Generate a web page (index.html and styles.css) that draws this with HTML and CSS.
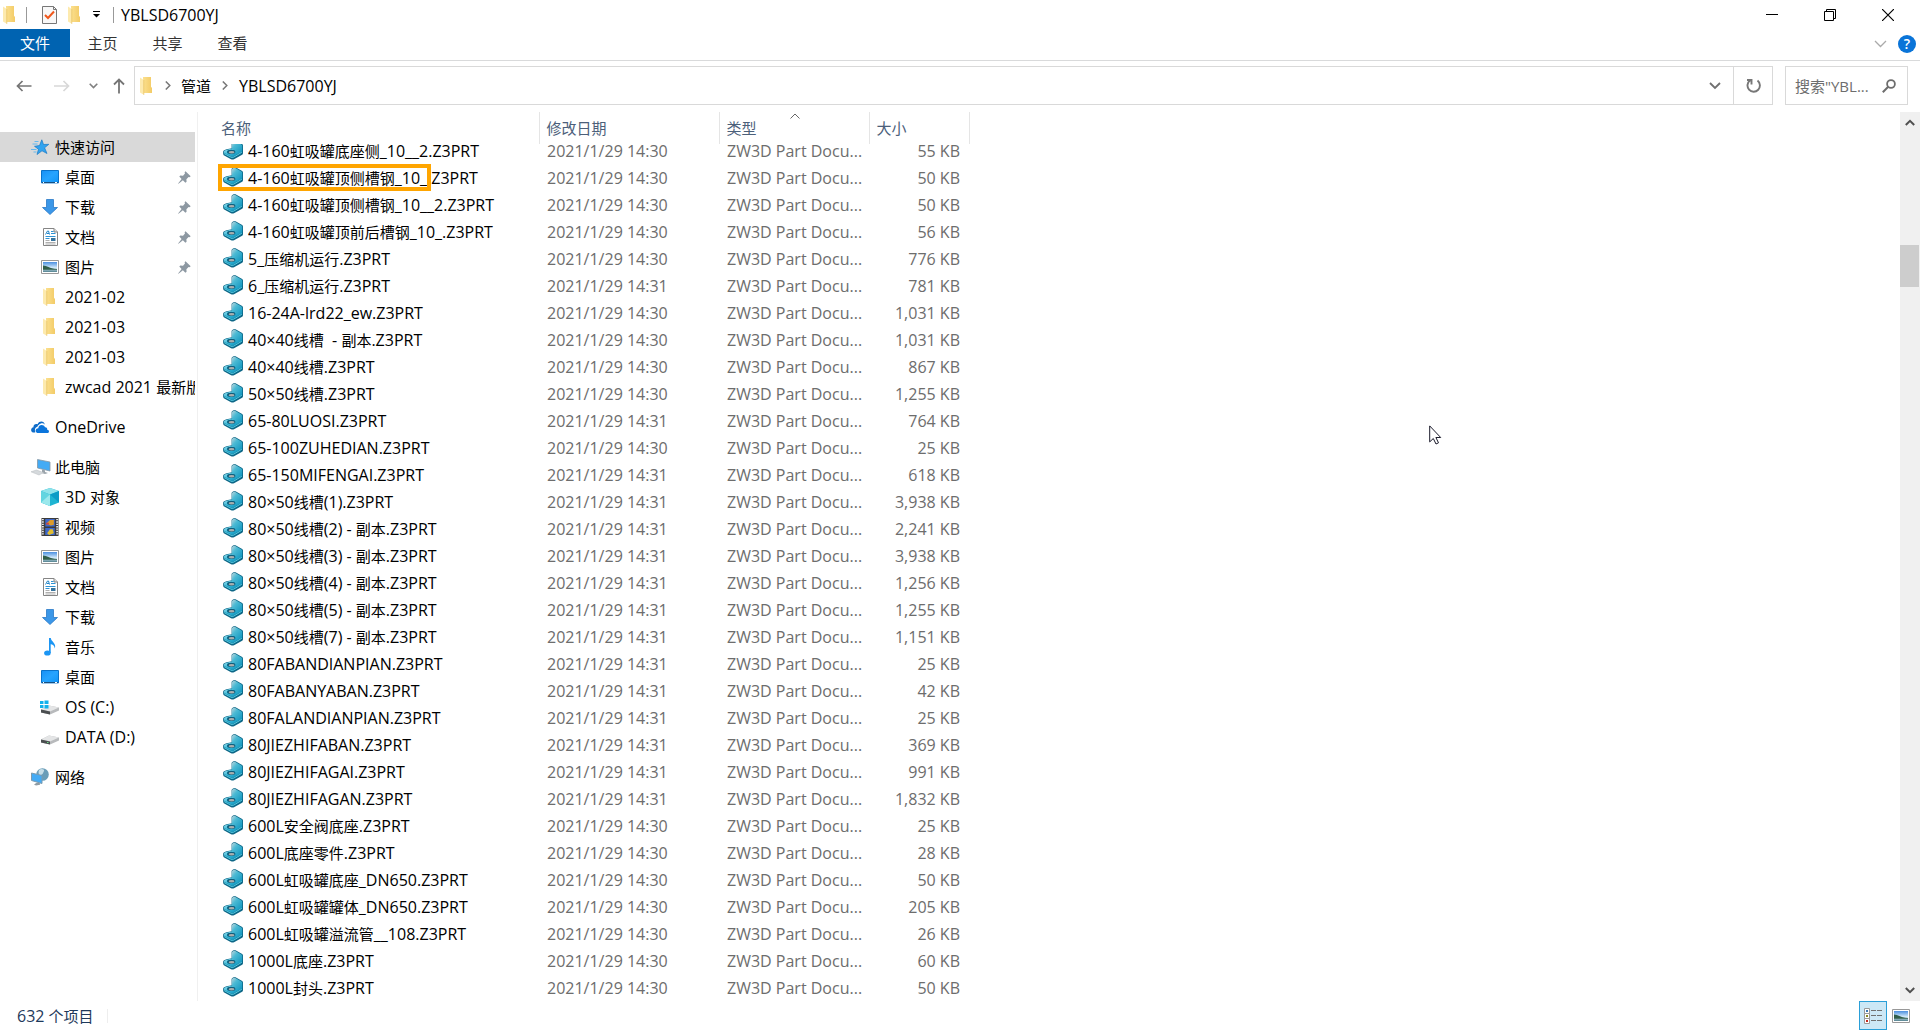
FILE: index.html
```html
<!DOCTYPE html>
<html lang="zh-CN">
<head>
<meta charset="utf-8">
<title>YBLSD6700YJ</title>
<link rel="stylesheet" href="styles.css">
</head>
<body>
<svg class="defs" width="0" height="0" aria-hidden="true">
  <defs>
    <linearGradient id="g-part" x1="0" y1="0" x2="1" y2="1"><stop offset="0" stop-color="#9fe3f0"/><stop offset=".45" stop-color="#2fb4d6"/><stop offset="1" stop-color="#0a86b0"/></linearGradient>
    <linearGradient id="g-fin" x1="0" y1="0" x2="1" y2="1"><stop offset="0" stop-color="#b9d3da"/><stop offset=".35" stop-color="#4bbad4"/><stop offset="1" stop-color="#1396bf"/></linearGradient>
    <linearGradient id="g-folder" x1="0" y1="0" x2="1" y2="0"><stop offset="0" stop-color="#fbe08f"/><stop offset="1" stop-color="#f3cb66"/></linearGradient>
    <linearGradient id="g-sky" x1="0" y1="0" x2="0" y2="1"><stop offset="0" stop-color="#4a8fe0"/><stop offset=".6" stop-color="#d9eefb"/><stop offset="1" stop-color="#4f7f8c"/></linearGradient>
    <linearGradient id="g-screen" x1="0" y1="0" x2="1" y2="1"><stop offset="0" stop-color="#1790f5"/><stop offset=".5" stop-color="#27a4ff"/><stop offset="1" stop-color="#0f94f7"/></linearGradient>
    <symbol id="part" viewBox="0 0 20 20"><path d="M.2 11.500C.5 9.500 6 8.800 8.600 8.200V2C9 .5 11 0 12.500.3L19.200 4c.6.500.8 1 .8 2v7c0 1-.5 1.600-1.300 2.100L11 19.200c-1 .5-2 .5-3 0L1.200 15.600C.2 15 0 13.500.2 11.500Z" fill="#0d6787"/><path d="M1 11.500C1.500 10.200 6 9.300 9 8.600l9.500 3.200-8 4.800c-.7.400-1.500.4-2.300 0L1.300 13C.8 12.600.8 12 1 11.500Z" fill="url(#g-part)"/><path d="M9 8.600V2.500C9.300 1.200 11 .8 12.300 1.100L18.500 4.500c.5.400.7.800.7 1.500v5.200c0 .4-.3.600-.7.700-3 1.300-6.500.3-9.500-3.300Z" fill="url(#g-fin)"/><path d="M1.200 13.600 8 17.200c.9.400 1.800.4 2.600 0L18.800 12.300" fill="none" stroke="#5fd6ec" stroke-width=".9"/><ellipse cx="8.200" cy="11.900" rx="4.200" ry="2.100" fill="#0d5f7e"/><ellipse cx="8.600" cy="12.300" rx="2.900" ry="1.300" fill="#a9aeae"/></symbol>
    <symbol id="folder" viewBox="0 0 12 18"><path d="M3 0h8v9.800l1 1.200V16H3Z" fill="url(#g-folder)"/><path d="M0 .5 3.800 3v14.800L0 15.500Z" fill="#fdeaae"/><path d="M3.800 3v14.800" stroke="#e6bf5b" stroke-width=".7"/></symbol>
    <symbol id="star" viewBox="0 0 18 16"><path d="m10.800.8 1.700 4.700 5.300-.2-4.200 3.500 2.400 5.700-5-2.700L6 15.500l1.500-5.300L3.500 7.300l5-.8Z" fill="#31a3ef" stroke="#1979c4" stroke-width=".7"/><path d="M3.500 2.500h4M1.500 5h5M0 10.500h5.500M2.500 13h3" stroke="#66b9ee" stroke-width="1"/></symbol>
    <symbol id="desktop" viewBox="0 0 18 14"><path d="M.5.500h17v12.400H.5Z" fill="url(#g-screen)" stroke="#0b72c9"/><path d="M1 12.500h16" stroke="#174f80"/><path d="M2 12.500h1M14 12.500h2" stroke="#fff"/></symbol>
    <symbol id="down" viewBox="0 0 16 16"><path d="M4.500.500h7v8h4L8 15.500.500 8.500h4Z" fill="#3b97e8" stroke="#2a78c6" stroke-width=".8"/></symbol>
    <symbol id="doc" viewBox="0 0 15 18"><path d="M.5.500h10.500l3.500 3.500v13.500H.5Z" fill="#fff" stroke="#858585"/><path d="M11 .5V4h3.500" fill="#ddd" stroke="#858585"/><path d="m2.500 6.500 2-3.500h1l1 3.500M4 5.500h2" fill="none" stroke="#2386c8"/><path d="M8 3.500h2.500M8 5.500h4.500M2.500 8.500h10M2.500 10.500h4" stroke="#2d93d4"/><path d="M2.500 12.500h4M2.500 14.500h10M2.500 16h10" stroke="#a6a6a6" stroke-width=".9"/><path d="M8 10h4.500v3H8Z" fill="#36739d"/></symbol>
    <symbol id="picture" viewBox="0 0 18 14"><path d="M.5.500h17v13H.5Z" fill="#fff" stroke="#989898"/><path d="M2 2h14v10H2Z" fill="url(#g-sky)"/><path d="M2 5.500c4 0 6 3 14 3.500v.8H2Z" fill="#315e4a"/></symbol>
    <symbol id="cloud" viewBox="0 0 18 12"><path d="M1.800 11.500C-.8 10-.2 6.800 2.500 6.300 2 3.800 4.500 2.200 6.500 3.200 8.500-.8 13.500.200 13.700 3.800 11-.200 6 5 6.500 5.800 3.800 6 3.500 9.500 4.300 11.500Z" fill="#0f6cc8"/><path d="M6.300 12C3.500 11 4.300 7.300 7.300 7.200 7.500 3.300 12.800 2.800 14 6.300c2-.2 2.300 1.300 2.200 2.400 2.300.3 2.300 2.900.3 3.300Z" fill="#0b75dc"/></symbol>
    <symbol id="pc" viewBox="0 0 20 18"><path d="m6.500 1.500 12.500 2.500v9L6.500 10Z" fill="#44abf5" stroke="#8796a2" stroke-width=".8"/><path d="m11 11.500 3 .8v1.700l3 1-3 1-5-1.500 2-.6Z" fill="#9aa3aa"/><path d="M0 13.800 5.500 12l7 2.600L8 17Z" fill="#d5d9dc" stroke="#b4babf" stroke-width=".5"/></symbol>
    <symbol id="cube" viewBox="0 0 18 18"><path d="m9 0 9 3v11.500L9 18 0 14.500V3Z" fill="#1eb4d2"/><path d="m0 3 9-3 9 3-9 3.500Z" fill="#8fe3ea"/><path d="M0 3 9 6.500V18L0 14.500Z" fill="#62d5e0"/><path d="M9 6.500 0 14.500 9 18Z" fill="#9be8ec"/><path d="M9 6.500 18 14.500V3Z" fill="#0b9cc6"/></symbol>
    <symbol id="film" viewBox="0 0 18 19"><path d="M0 0h18v19H0Z" fill="#3b3b3b"/><path d="M1.500 1v17M16.500 1v17" stroke="#eee" stroke-width="1.800" stroke-dasharray="1.500 1"/><path d="M4 1h10v8H4ZM4 10.500h10V18H4Z" fill="#3d68c9"/><path d="M9 2h4v5l-3 1-5-2Z" fill="#dd9b28"/><path d="M9 12h3l1 4-5 2-2-2Z" fill="#e1bd32"/><path d="M5 5h3v2H5Z" fill="#c94845"/></symbol>
    <symbol id="note" viewBox="0 0 12 18"><ellipse cx="3.400" cy="15" rx="3.300" ry="2.600" fill="#1b95f3"/><path d="M5 15V0h1.800c.4 3.800 6 5.300 3.900 10.500C10.500 7 8 6.500 6.700 6.300V15Z" fill="#1b95f3"/></symbol>
    <symbol id="drive" viewBox="0 0 18 10"><path d="M0 4.500 8 .5l10 2v3L9 9.500 0 7.500Z" fill="#b8babc"/><path d="M0 4.500 8 .5l10 2-9 4Z" fill="#e4e5e6"/><path d="m0 4.500 9 2v3L0 7.500Z" fill="#4b4e50"/><path d="M6 7.500h1.500" stroke="#6fe08b"/></symbol>
    <symbol id="osdrive" viewBox="0 0 19 15"><path d="M1 9.500 9 5.500l10 2v3L10 14.500 1 12.500Z" fill="#b8babc"/><path d="M1 9.500 9 5.500l10 2-9 4Z" fill="#e4e5e6"/><path d="m1 9.500 9 2v3L1 12.500Z" fill="#4b4e50"/><path d="M0 1h3.500v3H0ZM4.500.500H8.500V4h-4ZM0 5h3.500v3H0ZM4.500 5h4v3.500h-4Z" fill="#12b1ec"/></symbol>
    <symbol id="network" viewBox="0 0 18 18"><circle cx="11.500" cy="6.500" r="6.300" fill="#6a9db8"/><path d="M8 2c2-2 6-1 5 1s-1 3-3 4-3-2-2-5Z" fill="#c6dde7"/><path d="m.5 5 10.500 2.500v8L.5 12.500Z" fill="#44abf5" stroke="#7b9bb0"/><path d="m6 14.500 3 .8v1.500l-4 .7-2-1Z" fill="#8f9ba3"/></symbol>
    <symbol id="pin" viewBox="0 0 13 13"><path d="m7.500.200 5.200 5-1.200 1-.9-.2-2.200 2.300.2 2.500-1.200 1-2.500-2.600L.5 12.800l-.4-.4 3.500-4.500L1.300 5.600l1-1 2.700.1L7 2.500l-.4-1.300Z" fill="#8d98a2"/></symbol>
  </defs>
</svg>

<header class="titlebar">
  <svg class="i-folder" aria-hidden="true"><use href="#folder"/></svg>
  <span class="rule"></span>
  <button class="quick" aria-label="属性"><svg width="15" height="18" viewBox="0 0 15 18"><path d="M.5.500h11l3 3v14H.5Z" fill="#f8f8f8" stroke="#777"/><path d="M11.500.500v3h3" fill="none" stroke="#777"/><path d="m3 9 3 3 6-6.500" fill="none" stroke="#f0581c" stroke-width="2"/></svg></button>
  <button class="quick" aria-label="新建文件夹"><svg class="i-folder"><use href="#folder"/></svg></button>
  <button class="quick menu" aria-label="自定义快速访问工具栏"><svg width="7" height="7" viewBox="0 0 7 7"><path d="M0 .5h7" stroke="#000"/><path d="M0 3h7L3.500 6.500Z"/></svg></button>
  <span class="rule"></span>
  <h1>YBLSD6700YJ</h1>
  <div class="winbtns">
    <button aria-label="最小化"><svg width="12" height="12" viewBox="0 0 12 12"><path d="M0 5.500h12" stroke="#000"/></svg></button>
    <button aria-label="向下还原"><svg width="12" height="12" viewBox="0 0 12 12" fill="none" stroke="#000"><path d="M.5 2.500h9v9h-9Z"/><path d="M2.500 2.500v-2h9v9h-2"/></svg></button>
    <button aria-label="关闭"><svg width="12" height="12" viewBox="0 0 12 12"><path d="m0 0 12 12M12 0 0 12" stroke="#000" stroke-width="1.200"/></svg></button>
  </div>
</header>

<nav class="ribbon">
  <button class="tab file">文件</button>
  <button class="tab">主页</button>
  <button class="tab">共享</button>
  <button class="tab">查看</button>
  <div class="ribbon-end">
    <button aria-label="展开功能区"><svg width="13" height="8" viewBox="0 0 13 8"><path d="m1 1 5.500 5.500L12 1" fill="none" stroke="#aaa" stroke-width="1.300"/></svg></button>
    <button class="help" aria-label="帮助">?</button>
  </div>
</nav>

<div class="addressbar">
  <div class="arrows">
    <button aria-label="后退"><svg width="16" height="12" viewBox="0 0 16 12"><path d="M15.500 6H1.500M6.500 1l-5 5 5 5" fill="none" stroke="#757575" stroke-width="1.700"/></svg></button>
    <button aria-label="前进"><svg width="16" height="12" viewBox="0 0 16 12"><path d="M0 6h14M9.500 1l5 5-5 5" fill="none" stroke="#d8d8d8" stroke-width="1.700"/></svg></button>
    <button class="narrow" aria-label="最近浏览的位置"><svg width="9" height="6" viewBox="0 0 9 6"><path d="m.7.700 3.800 3.800L8.300.700" fill="none" stroke="#808080" stroke-width="1.600"/></svg></button>
    <button class="narrow" aria-label="上移"><svg width="12" height="16" viewBox="0 0 12 16"><path d="M6 15.500V1.500M1 6.500l5-5 5 5" fill="none" stroke="#757575" stroke-width="1.800"/></svg></button>
  </div>
  <div class="path">
    <svg class="i-folder" aria-hidden="true"><use href="#folder"/></svg>
    <svg class="sep" width="6" height="9" viewBox="0 0 6 9"><path d="m.8.500 4 4-4 4" fill="none" stroke="#777" stroke-width="1.500"/></svg>
    <a href="#" class="zh">管道</a>
    <svg class="sep" width="6" height="9" viewBox="0 0 6 9"><path d="m.8.500 4 4-4 4" fill="none" stroke="#777" stroke-width="1.500"/></svg>
    <a href="#">YBLSD6700YJ</a>
    <button class="drop" aria-label="以前的位置"><svg width="12" height="8" viewBox="0 0 12 8"><path d="m1 1 5 5 5-5" fill="none" stroke="#707070" stroke-width="1.800"/></svg></button>
    <button class="refresh" aria-label="刷新"><svg width="15" height="15" viewBox="0 0 15 15"><path d="M11.500 2.600A6.200 6.200 0 1 1 4 2.500M1 2h4.500V6.500" fill="none" stroke="#777" stroke-width="1.900"/></svg></button>
  </div>
  <label class="search"><input type="text" aria-label="搜索" placeholder="搜索&quot;YBL..."><svg width="14" height="14" viewBox="0 0 14 14"><circle cx="9" cy="5" r="3.900" fill="none" stroke="#6d6d6d" stroke-width="1.800"/><path d="M6.200 7.800.800 13.200" stroke="#6d6d6d" stroke-width="2"/></svg></label>
</div>

<main>
  <aside>
    <ul>
      <li class="root active"><svg class="ic"><use href="#star" width="18" height="16" y="1"/></svg><a href="#" class="zh">快速访问</a></li>
      <li><svg class="ic"><use href="#desktop" width="18" height="14" y="2"/></svg><a href="#" class="zh">桌面</a><svg class="pin"><use href="#pin"/></svg></li>
      <li><svg class="ic"><use href="#down" width="16" height="16" x="1" y="1"/></svg><a href="#" class="zh">下载</a><svg class="pin"><use href="#pin"/></svg></li>
      <li><svg class="ic"><use href="#doc" width="15" height="18" x="2"/></svg><a href="#" class="zh">文档</a><svg class="pin"><use href="#pin"/></svg></li>
      <li><svg class="ic"><use href="#picture" width="18" height="14" y="2"/></svg><a href="#" class="zh">图片</a><svg class="pin"><use href="#pin"/></svg></li>
      <li><svg class="ic"><use href="#folder" width="12" height="18" x="2"/></svg><a href="#">2021-02</a></li>
      <li><svg class="ic"><use href="#folder" width="12" height="18" x="2"/></svg><a href="#">2021-03</a></li>
      <li><svg class="ic"><use href="#folder" width="12" height="18" x="2"/></svg><a href="#">2021-03</a></li>
      <li><svg class="ic"><use href="#folder" width="12" height="18" x="2"/></svg><a href="#">zwcad 2021 <span class="zh">最新版</span></a></li>
    </ul>
    <ul>
      <li class="root"><svg class="ic"><use href="#cloud" width="18" height="12" y="3"/></svg><a href="#">OneDrive</a></li>
    </ul>
    <ul>
      <li class="root"><svg class="ic"><use href="#pc" width="20" height="18"/></svg><a href="#" class="zh">此电脑</a></li>
      <li><svg class="ic"><use href="#cube" width="18" height="18"/></svg><a href="#">3D <span class="zh">对象</span></a></li>
      <li><svg class="ic"><use href="#film" width="18" height="18"/></svg><a href="#" class="zh">视频</a></li>
      <li><svg class="ic"><use href="#picture" width="18" height="14" y="2"/></svg><a href="#" class="zh">图片</a></li>
      <li><svg class="ic"><use href="#doc" width="15" height="18" x="2"/></svg><a href="#" class="zh">文档</a></li>
      <li><svg class="ic"><use href="#down" width="16" height="16" x="1" y="1"/></svg><a href="#" class="zh">下载</a></li>
      <li><svg class="ic"><use href="#note" width="12" height="18" x="3"/></svg><a href="#" class="zh">音乐</a></li>
      <li><svg class="ic"><use href="#desktop" width="18" height="14" y="2"/></svg><a href="#" class="zh">桌面</a></li>
      <li><svg class="ic"><use href="#osdrive" width="19" height="15" x="-1" y="2"/></svg><a href="#">OS (C:)</a></li>
      <li><svg class="ic"><use href="#drive" width="18" height="10" y="7"/></svg><a href="#">DATA (D:)</a></li>
    </ul>
    <ul>
      <li class="root"><svg class="ic"><use href="#network" width="18" height="18"/></svg><a href="#" class="zh">网络</a></li>
    </ul>
  </aside>

  <section class="files">
    <table>
      <colgroup><col class="c-name"><col class="c-date"><col class="c-type"><col class="c-size"></colgroup>
      <thead><tr><th>名称</th><th>修改日期</th><th class="sorted">类型<svg width="10" height="6" viewBox="0 0 10 6"><path d="M.5 5.500 5 1l4.500 4.500" fill="none" stroke="#666"/></svg></th><th>大小</th></tr></thead>
      <tbody>
        <tr class="cut"><td><div><svg><use href="#part"/></svg><span>4-160<span class="zh">虹吸罐底座侧</span>_10__2.Z3PRT</span></div></td><td><div>2021/1/29 14:30</div></td><td><div>ZW3D Part Docu...</div></td><td><div>55 KB</div></td></tr>
        <tr class="marked"><td><div><svg><use href="#part"/></svg><span>4-160<span class="zh">虹吸罐顶侧槽钢</span>_10_.Z3PRT</span></div></td><td><div>2021/1/29 14:30</div></td><td><div>ZW3D Part Docu...</div></td><td><div>50 KB</div></td></tr>
        <tr><td><div><svg><use href="#part"/></svg><span>4-160<span class="zh">虹吸罐顶侧槽钢</span>_10__2.Z3PRT</span></div></td><td><div>2021/1/29 14:30</div></td><td><div>ZW3D Part Docu...</div></td><td><div>50 KB</div></td></tr>
        <tr><td><div><svg><use href="#part"/></svg><span>4-160<span class="zh">虹吸罐顶前后槽钢</span>_10_.Z3PRT</span></div></td><td><div>2021/1/29 14:30</div></td><td><div>ZW3D Part Docu...</div></td><td><div>56 KB</div></td></tr>
        <tr><td><div><svg><use href="#part"/></svg><span>5_<span class="zh">压缩机运行</span>.Z3PRT</span></div></td><td><div>2021/1/29 14:30</div></td><td><div>ZW3D Part Docu...</div></td><td><div>776 KB</div></td></tr>
        <tr><td><div><svg><use href="#part"/></svg><span>6_<span class="zh">压缩机运行</span>.Z3PRT</span></div></td><td><div>2021/1/29 14:31</div></td><td><div>ZW3D Part Docu...</div></td><td><div>781 KB</div></td></tr>
        <tr><td><div><svg><use href="#part"/></svg><span>16-24A-lrd22_ew.Z3PRT</span></div></td><td><div>2021/1/29 14:30</div></td><td><div>ZW3D Part Docu...</div></td><td><div>1,031 KB</div></td></tr>
        <tr><td><div><svg><use href="#part"/></svg><span>40×40<span class="zh">线槽</span>&nbsp; - <span class="zh">副本</span>.Z3PRT</span></div></td><td><div>2021/1/29 14:30</div></td><td><div>ZW3D Part Docu...</div></td><td><div>1,031 KB</div></td></tr>
        <tr><td><div><svg><use href="#part"/></svg><span>40×40<span class="zh">线槽</span>.Z3PRT</span></div></td><td><div>2021/1/29 14:30</div></td><td><div>ZW3D Part Docu...</div></td><td><div>867 KB</div></td></tr>
        <tr><td><div><svg><use href="#part"/></svg><span>50×50<span class="zh">线槽</span>.Z3PRT</span></div></td><td><div>2021/1/29 14:30</div></td><td><div>ZW3D Part Docu...</div></td><td><div>1,255 KB</div></td></tr>
        <tr><td><div><svg><use href="#part"/></svg><span>65-80LUOSI.Z3PRT</span></div></td><td><div>2021/1/29 14:31</div></td><td><div>ZW3D Part Docu...</div></td><td><div>764 KB</div></td></tr>
        <tr><td><div><svg><use href="#part"/></svg><span>65-100ZUHEDIAN.Z3PRT</span></div></td><td><div>2021/1/29 14:30</div></td><td><div>ZW3D Part Docu...</div></td><td><div>25 KB</div></td></tr>
        <tr><td><div><svg><use href="#part"/></svg><span>65-150MIFENGAI.Z3PRT</span></div></td><td><div>2021/1/29 14:31</div></td><td><div>ZW3D Part Docu...</div></td><td><div>618 KB</div></td></tr>
        <tr><td><div><svg><use href="#part"/></svg><span>80×50<span class="zh">线槽</span>(1).Z3PRT</span></div></td><td><div>2021/1/29 14:31</div></td><td><div>ZW3D Part Docu...</div></td><td><div>3,938 KB</div></td></tr>
        <tr><td><div><svg><use href="#part"/></svg><span>80×50<span class="zh">线槽</span>(2) - <span class="zh">副本</span>.Z3PRT</span></div></td><td><div>2021/1/29 14:31</div></td><td><div>ZW3D Part Docu...</div></td><td><div>2,241 KB</div></td></tr>
        <tr><td><div><svg><use href="#part"/></svg><span>80×50<span class="zh">线槽</span>(3) - <span class="zh">副本</span>.Z3PRT</span></div></td><td><div>2021/1/29 14:31</div></td><td><div>ZW3D Part Docu...</div></td><td><div>3,938 KB</div></td></tr>
        <tr><td><div><svg><use href="#part"/></svg><span>80×50<span class="zh">线槽</span>(4) - <span class="zh">副本</span>.Z3PRT</span></div></td><td><div>2021/1/29 14:31</div></td><td><div>ZW3D Part Docu...</div></td><td><div>1,256 KB</div></td></tr>
        <tr><td><div><svg><use href="#part"/></svg><span>80×50<span class="zh">线槽</span>(5) - <span class="zh">副本</span>.Z3PRT</span></div></td><td><div>2021/1/29 14:31</div></td><td><div>ZW3D Part Docu...</div></td><td><div>1,255 KB</div></td></tr>
        <tr><td><div><svg><use href="#part"/></svg><span>80×50<span class="zh">线槽</span>(7) - <span class="zh">副本</span>.Z3PRT</span></div></td><td><div>2021/1/29 14:31</div></td><td><div>ZW3D Part Docu...</div></td><td><div>1,151 KB</div></td></tr>
        <tr><td><div><svg><use href="#part"/></svg><span>80FABANDIANPIAN.Z3PRT</span></div></td><td><div>2021/1/29 14:31</div></td><td><div>ZW3D Part Docu...</div></td><td><div>25 KB</div></td></tr>
        <tr><td><div><svg><use href="#part"/></svg><span>80FABANYABAN.Z3PRT</span></div></td><td><div>2021/1/29 14:31</div></td><td><div>ZW3D Part Docu...</div></td><td><div>42 KB</div></td></tr>
        <tr><td><div><svg><use href="#part"/></svg><span>80FALANDIANPIAN.Z3PRT</span></div></td><td><div>2021/1/29 14:31</div></td><td><div>ZW3D Part Docu...</div></td><td><div>25 KB</div></td></tr>
        <tr><td><div><svg><use href="#part"/></svg><span>80JIEZHIFABAN.Z3PRT</span></div></td><td><div>2021/1/29 14:31</div></td><td><div>ZW3D Part Docu...</div></td><td><div>369 KB</div></td></tr>
        <tr><td><div><svg><use href="#part"/></svg><span>80JIEZHIFAGAI.Z3PRT</span></div></td><td><div>2021/1/29 14:31</div></td><td><div>ZW3D Part Docu...</div></td><td><div>991 KB</div></td></tr>
        <tr><td><div><svg><use href="#part"/></svg><span>80JIEZHIFAGAN.Z3PRT</span></div></td><td><div>2021/1/29 14:31</div></td><td><div>ZW3D Part Docu...</div></td><td><div>1,832 KB</div></td></tr>
        <tr><td><div><svg><use href="#part"/></svg><span>600L<span class="zh">安全阀底座</span>.Z3PRT</span></div></td><td><div>2021/1/29 14:30</div></td><td><div>ZW3D Part Docu...</div></td><td><div>25 KB</div></td></tr>
        <tr><td><div><svg><use href="#part"/></svg><span>600L<span class="zh">底座零件</span>.Z3PRT</span></div></td><td><div>2021/1/29 14:30</div></td><td><div>ZW3D Part Docu...</div></td><td><div>28 KB</div></td></tr>
        <tr><td><div><svg><use href="#part"/></svg><span>600L<span class="zh">虹吸罐底座</span>_DN650.Z3PRT</span></div></td><td><div>2021/1/29 14:30</div></td><td><div>ZW3D Part Docu...</div></td><td><div>50 KB</div></td></tr>
        <tr><td><div><svg><use href="#part"/></svg><span>600L<span class="zh">虹吸罐罐体</span>_DN650.Z3PRT</span></div></td><td><div>2021/1/29 14:30</div></td><td><div>ZW3D Part Docu...</div></td><td><div>205 KB</div></td></tr>
        <tr><td><div><svg><use href="#part"/></svg><span>600L<span class="zh">虹吸罐溢流管</span>__108.Z3PRT</span></div></td><td><div>2021/1/29 14:30</div></td><td><div>ZW3D Part Docu...</div></td><td><div>26 KB</div></td></tr>
        <tr><td><div><svg><use href="#part"/></svg><span>1000L<span class="zh">底座</span>.Z3PRT</span></div></td><td><div>2021/1/29 14:30</div></td><td><div>ZW3D Part Docu...</div></td><td><div>60 KB</div></td></tr>
        <tr><td><div><svg><use href="#part"/></svg><span>1000L<span class="zh">封头</span>.Z3PRT</span></div></td><td><div>2021/1/29 14:30</div></td><td><div>ZW3D Part Docu...</div></td><td><div>50 KB</div></td></tr>
      </tbody>
    </table>
  </section>

  <div class="scrollbar" aria-hidden="true">
    <svg width="10" height="7" viewBox="0 0 10 7"><path d="M.8 6 5 1.800 9.200 6" fill="none" stroke="#505050" stroke-width="2"/></svg>
    <div class="track"><div class="thumb"></div></div>
    <svg width="10" height="7" viewBox="0 0 10 7"><path d="M.8 1 5 5.200 9.200 1" fill="none" stroke="#505050" stroke-width="2"/></svg>
  </div>
</main>

<footer>
  <span class="count">632 <span class="zh">个项目</span></span>
  <div class="views">
    <button class="on" aria-label="详细信息"><svg width="18" height="16" viewBox="0 0 18 16"><path d="M.5.500h5v5h-5ZM.5 5.500h5v5h-5ZM.5 10.500h5v5h-5Z" fill="#fff" stroke="#9a9a9a"/><path d="M2 2h2v2H2Z" fill="#3c78b4"/><path d="M2 7h2v2H2Z" fill="#8a8a20"/><path d="M2 12h2v2H2Z" fill="#c5281c"/><path d="M7 2.500h5M13 2.500h5M7 7.500h5M13 7.500h5M7 12.500h5M13 12.500h5" stroke="#707070"/></svg></button>
    <button aria-label="大缩略图"><svg width="18" height="14"><use href="#picture"/></svg></button>
  </div>
</footer>

<svg class="cursor" width="13" height="20" viewBox="0 0 13 20" aria-hidden="true"><path d="M.7.900v16l3.600-3.400 2.700 5.500 2.500-1.200-2.600-5.300h4.800Z" fill="#fff" stroke="#1a1a2a"/></svg>
</body>
</html>
```
FILE: styles.css
```css
*, *::after { box-sizing: border-box; }

body {
  margin: 0;
  min-height: 100vh;
  display: flex;
  flex-direction: column;
  background: #fff;
  color: #000;
  font: 16px/24px "Open Sans", "Noto Sans CJK SC", sans-serif;
  position: relative;
}

.zh { font-size: 15px; }
.defs { position: absolute; }
svg { display: block; flex: none; }
a { color: inherit; text-decoration: none; }
ul { list-style: none; margin: 0; padding: 0; }

button {
  border: 0;
  padding: 0;
  margin: 0;
  background: none;
  color: inherit;
  font: inherit;
  display: flex;
  align-items: center;
  justify-content: center;
}

.i-folder { width: 12px; height: 18px; }

/* title bar */
.titlebar { display: flex; align-items: center; height: 29px; padding-left: 3px; }
.titlebar h1 { margin: 0 0 0 7px; font-size: 16px; font-weight: 400; }
.rule { width: 1px; height: 16px; background: #999; margin-left: 11px; }
.quick { margin-left: 11px; }
.rule + .quick { margin-left: 15px; }
.quick.menu { margin-left: 13px; }
.quick.menu + .rule { margin-left: 13px; }
.winbtns { display: flex; margin-left: auto; padding-right: 3px; }
.winbtns button { width: 58px; height: 28px; }

/* ribbon tabs */
.ribbon { display: flex; height: 32px; border-bottom: 1px solid #d9dadb; color: #333; }
.tab { width: 65px; height: 28px; font-size: 15px; }
.tab.file { width: 70px; background: #0063b1; color: #fff; }
.ribbon-end { display: flex; align-items: center; gap: 11px; margin-left: auto; padding: 0 4px 2px 0; }
.help { width: 18px; height: 18px; border-radius: 50%; background: #0a74d8; color: #fff; font-size: 14px; font-weight: 600; }

/* address bar */
.addressbar { display: flex; padding: 5px 12px 7px 0; }
.arrows { display: flex; width: 134px; padding-left: 5px; }
.arrows button { width: 38px; }
.arrows .narrow { width: 25px; }
.path { flex: 1; display: flex; align-items: center; height: 39px; border: 1px solid #d9d9d9; padding-left: 5px; }
.sep { margin: 0 10px 0 13px; }
.path a + .sep { margin: 0 11px; }
.path .drop { margin-left: auto; width: 36px; height: 37px; }
.path .refresh { width: 39px; height: 37px; border-left: 1px solid #d9d9d9; }
.search { display: flex; align-items: center; width: 123px; height: 39px; border: 1px solid #d9d9d9; margin-left: 12px; padding: 0 11px 0 9px; }
.search input { flex: 1; min-width: 0; width: 0; border: 0; padding: 0; background: none; font: inherit; font-size: 15px; outline: 0; }
.search input::placeholder { color: #6d6d6d; opacity: 1; }

/* body */
main { flex: 1; display: flex; }

aside { width: 198px; padding: 20px 2px 0 0; border-right: 1px solid #f0f0f0; }
aside ul { margin-bottom: 10px; }
aside li { display: flex; align-items: center; height: 30px; padding-left: 41px; gap: 6px; white-space: nowrap; overflow: hidden; }
aside li.root { padding-left: 31px; }
aside li.active { background: #d9d9d9; }
aside li a { flex: 1; }
.ic { width: 18px; height: 18px; overflow: visible; }
.pin { width: 13px; height: 13px; margin-right: 4px; }

.files { flex: 1; min-width: 0; overflow: hidden; }
table { table-layout: fixed; width: 771px; border-collapse: collapse; }
.c-name { width: 341px; }
.c-date { width: 180px; }
.c-type { width: 150px; }
.c-size { width: 100px; }
th, td { padding: 0; font-weight: 400; text-align: left; }
th { height: 32px; padding-left: 7px; font-size: 15px; color: #4c607a; border-right: 1px solid #e5e5e5; position: relative; }
th:first-child { padding-left: 23px; }
.sorted svg { position: absolute; top: 1px; left: 70px; }
td div { display: flex; align-items: center; gap: 5px; height: 27px; line-height: 25px; padding: 2px 0 0 8px; color: #6d6d6d; white-space: pre; }
td:first-child div { padding-left: 25px; color: #000; position: relative; }
td:last-child div { justify-content: flex-end; padding-right: 9px; }
td svg { width: 20px; height: 20px; margin-bottom: 4px; }

/* first row, scrolled partly under the header */
.cut div { height: 20px; align-items: flex-end; padding-top: 0; }
.cut svg { margin-bottom: 4px; clip-path: inset(4px 0 0 0); }

.marked td:first-child div::after { content: ""; position: absolute; left: 20px; top: 0; width: 213px; height: 27px; border: 4px solid #ffa500; }

.scrollbar { display: flex; flex-direction: column; align-items: center; width: 20px; background: #f0f0f0; padding: 7px 0; }
.track { flex: 1; width: 100%; padding: 119px 1px 0 0; }
.thumb { height: 42px; background: #cdcdcd; }

/* status bar */
footer { display: flex; align-items: center; height: 29px; color: #1e395b; }
.count { padding: 0 13px 0 17px; line-height: 14px; border-right: 1px solid #eee; }
.views { display: flex; margin-left: auto; padding-right: 5px; }
.views button { width: 28px; height: 29px; }
.views .on { background: #cce8f6; border: 1px solid #2a9fd8; }

.cursor { position: absolute; left: 1429px; top: 425px; }
```
